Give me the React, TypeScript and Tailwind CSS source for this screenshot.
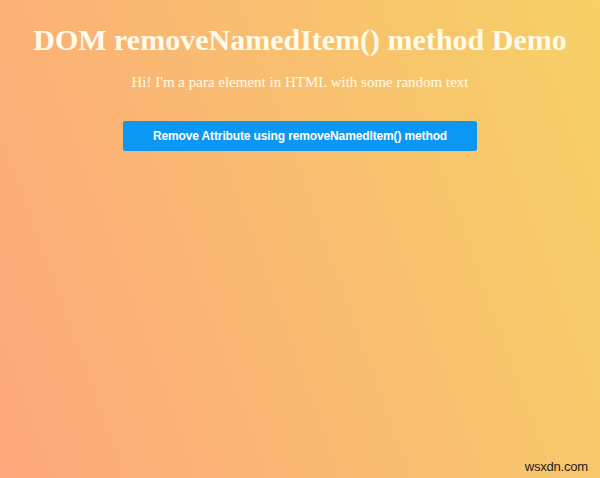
export default function App() {
  return (
    <div
      className="relative h-[478px] w-full overflow-hidden text-center bg-[linear-gradient(70deg,#fca77b_0%,#f6d166_100%)]"
      style={{ fontFamily: '"Liberation Serif", "Times New Roman", serif' }}
    >
      <div className="flex flex-col items-center">
        <h1 className="mt-[22px] text-[30px] leading-[35px] font-bold text-[#fffbea]">
          DOM removeNamedItem() method Demo
        </h1>
        <p className="mt-[16px] text-[15px] leading-[18px] text-[#fffbea]">
          Hi! I'm a para element in HTML with some random text
        </p>
        <button
          className="mt-[30px] h-[30px] w-[354px] rounded-[2px] bg-[#0d97f4] text-[12px] font-bold tracking-[-0.13px] text-white"
          style={{ fontFamily: '"Liberation Sans", Arial, sans-serif' }}
        >
          Remove Attribute using removeNamedItem() method
        </button>
      </div>
      <div
        className="absolute right-[12px] bottom-[4px] text-[13px] leading-[15px] tracking-[-0.2px] text-[#222222]"
        style={{ fontFamily: '"Liberation Sans", Arial, sans-serif' }}
      >
        wsxdn.com
      </div>
    </div>
  );
}
